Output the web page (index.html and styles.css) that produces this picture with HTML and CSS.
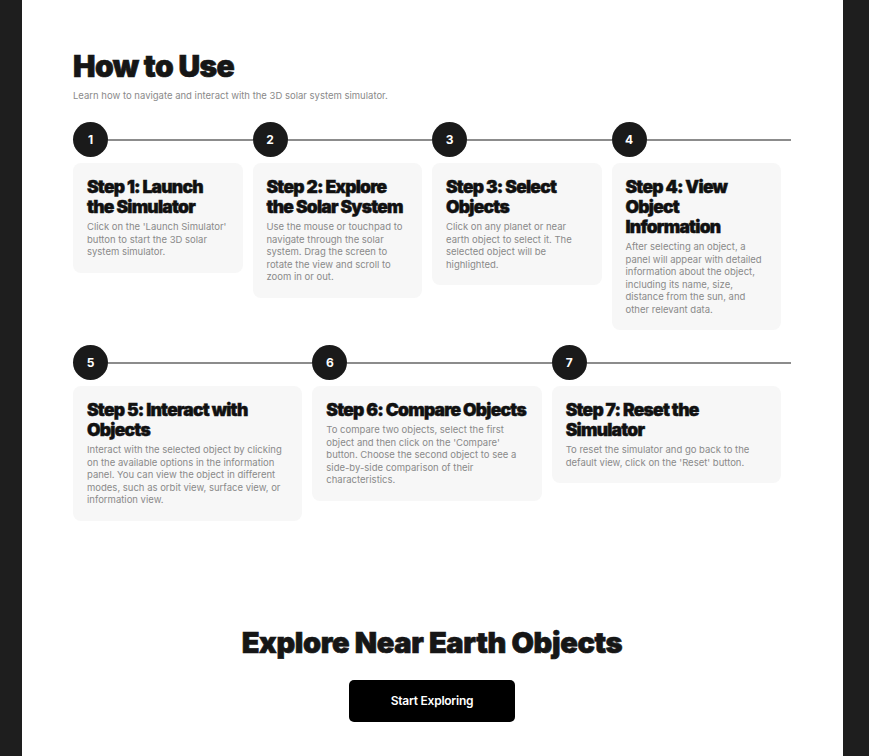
FILE: index.html
```html
<!DOCTYPE html>
<html lang="en">
<head>
<meta charset="utf-8">
<title>How to Use</title>
<link rel="stylesheet" href="styles.css">
</head>
<body>
<div class="page">
  <section class="how">
    <h1 class="title title-how">How to Use</h1>
    <p class="subtitle">Learn how to navigate and interact with the 3D solar system simulator.</p>

    <div class="steps steps-4">
      <div class="step">
        <div class="step-head"><span class="num">1</span><span class="line"></span></div>
        <div class="card">
          <h3>Step 1: Launch the Simulator</h3>
          <p>Click on the 'Launch Simulator' button to start the 3D solar system simulator.</p>
        </div>
      </div>
      <div class="step">
        <div class="step-head"><span class="num">2</span><span class="line"></span></div>
        <div class="card">
          <h3>Step 2: Explore the Solar System</h3>
          <p>Use the mouse or touchpad to navigate through the solar system. Drag the screen to rotate the view and scroll to zoom in or out.</p>
        </div>
      </div>
      <div class="step">
        <div class="step-head"><span class="num">3</span><span class="line"></span></div>
        <div class="card">
          <h3>Step 3: Select Objects</h3>
          <p>Click on any planet or near earth object to select it. The selected object will be highlighted.</p>
        </div>
      </div>
      <div class="step">
        <div class="step-head"><span class="num">4</span><span class="line"></span></div>
        <div class="card">
          <h3>Step 4: View Object Information</h3>
          <p>After selecting an object, a panel will appear with detailed information about the object, including its name, size, distance from the sun, and other relevant data.</p>
        </div>
      </div>
    </div>

    <div class="steps steps-3">
      <div class="step">
        <div class="step-head"><span class="num">5</span><span class="line"></span></div>
        <div class="card">
          <h3>Step 5: Interact with Objects</h3>
          <p>Interact with the selected object by clicking on the available options in the information panel. You can view the object in different modes, such as orbit view, surface view, or information view.</p>
        </div>
      </div>
      <div class="step">
        <div class="step-head"><span class="num">6</span><span class="line"></span></div>
        <div class="card">
          <h3>Step 6: Compare Objects</h3>
          <p>To compare two objects, select the first object and then click on the 'Compare' button. Choose the second object to see a side-by-side comparison of their characteristics.</p>
        </div>
      </div>
      <div class="step">
        <div class="step-head"><span class="num">7</span><span class="line"></span></div>
        <div class="card">
          <h3>Step 7: Reset the Simulator</h3>
          <p>To reset the simulator and go back to the default view, click on the 'Reset' button.</p>
        </div>
      </div>
    </div>
  </section>

  <section class="explore">
    <h2 class="title title-explore">Explore Near Earth Objects</h2>
    <a class="btn" href="#">Start Exploring</a>
  </section>
</div>
</body>
</html>
```

FILE: styles.css
```css
* { box-sizing: border-box; }
html, body { margin: 0; padding: 0; }
body {
  background: #1e1e1e;
  font-family: Inter, "Noto Sans", sans-serif;
  color: #111;
  height: 756px;
  overflow: hidden;
}
.page {
  margin-left: 22px;
  width: 821px;
  background: #fff;
  min-height: 756px;
  padding: 0 52px 0 51px;
}
.how { padding-top: 48px; }
.title {
  margin: 0;
  font-weight: 900;
  line-height: 36px;
  -webkit-text-stroke: 0.7px #161616;
  color: #161616;
}
.title-how {
  font-size: 30px;
  letter-spacing: -0.02em;
}
.title-explore {
  font-size: 29px;
  letter-spacing: -0.012em;
}
.subtitle {
  margin: 6px 0 20px;
  font-size: 9.5px;
  line-height: 12px;
  color: #8a8a8a;
}
.steps { display: flex; }
.steps-3 { margin-top: 15px; }
.step { flex: 1 1 0; min-width: 0; }
.step-head {
  display: flex;
  align-items: center;
  height: 35px;
}
.num {
  flex: 0 0 35px;
  width: 35px;
  height: 35px;
  border-radius: 50%;
  background: #1a1a1a;
  color: #fff;
  font-size: 12px;
  font-weight: 700;
  display: flex;
  align-items: center;
  justify-content: center;
}
.line {
  flex: 1;
  height: 2px;
  background: #8c8c8c;
}
.card {
  margin: 6px 10px 0 0;
  background: #f7f7f7;
  border-radius: 8px;
  padding: 14px 14px 14px;
}
.card h3 {
  margin: 0 0 4px;
  font-size: 17.5px;
  line-height: 20px;
  font-weight: 900;
  letter-spacing: -0.045em;
  -webkit-text-stroke: 0.45px #111;
  color: #111;
}
.card p {
  margin: 0;
  font-size: 9.5px;
  line-height: 12.5px;
  color: #8a8a8a;
}
.explore {
  padding-top: 104px;
  display: flex;
  flex-direction: column;
  align-items: center;
}
.btn {
  margin-top: 19px;
  width: 166px;
  height: 42px;
  background: #000;
  color: #fff;
  border-radius: 5px;
  font-size: 12px;
  font-weight: 600;
  text-decoration: none;
  display: flex;
  align-items: center;
  justify-content: center;
  letter-spacing: -0.02em;
}
```
